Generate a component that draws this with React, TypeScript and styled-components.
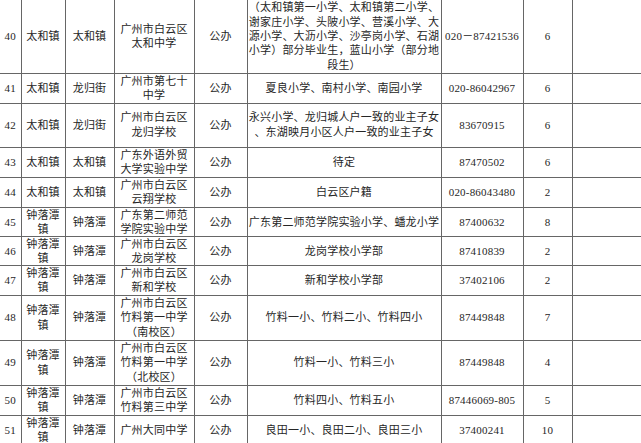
import React from 'react';
import styled, { createGlobalStyle } from 'styled-components';

const GlobalStyle = createGlobalStyle`
  html, body {
    margin: 0;
    padding: 0;
    background: #fff;
  }
`;

const Sheet = styled.div`
  width: 641px;
  height: 443px;
  overflow: hidden;
  background: #fff;
`;

const Table = styled.table`
  width: 641px;
  table-layout: fixed;
  border-collapse: collapse;
  font-family: 'Liberation Serif', 'Noto Sans CJK SC', serif;
  font-size: 11px;
  color: #262626;
`;

const Row = styled.tr<{ $h: number }>`
  height: ${(p) => p.$h}px;
`;

const Cell = styled.td`
  border: 1px solid #666;
  padding: 0;
  text-align: center;
  vertical-align: middle;
  letter-spacing: 0.2px;
  overflow: hidden;

  &:first-child {
    border-left: none;
  }
  &:last-child {
    border-right: none;
  }
  tr:first-child > & {
    border-top: none;
  }
`;

const Line = styled.div<{ $lh: number }>`
  white-space: nowrap;
  height: ${(p) => p.$lh}px;
  line-height: ${(p) => p.$lh}px;
  overflow: visible;
`;

const COLS = [21, 44, 49, 80, 53, 194, 82, 49, 69];

type RowData = {
  no: string;
  town: string[];
  street: string;
  school: string[];
  kind: string;
  area: string[];
  phone: string;
  classes: string;
  h: number;
  lh?: number;
};

const ROWS: RowData[] = [
  {
    no: '40',
    town: ['太和镇'],
    street: '太和镇',
    school: ['广州市白云区', '太和中学'],
    kind: '公办',
    area: [
      '（太和镇第一小学、太和镇第二小学、',
      '谢家庄小学、头陂小学、营溪小学、大',
      '源小学、大沥小学、沙亭岗小学、石湖',
      '小学）部分毕业生，蓝山小学（部分地',
      '段生）',
    ],
    phone: '020－87421536',
    classes: '6',
    h: 73,
    lh: 14.4,
  },
  { no: '41', town: ['太和镇'], street: '龙归街', school: ['广州市第七十', '中学'], kind: '公办', area: ['夏良小学、南村小学、南园小学'], phone: '020-86042967', classes: '6', h: 30 },
  {
    no: '42',
    town: ['太和镇'],
    street: '龙归街',
    school: ['广州市白云区', '龙归学校'],
    kind: '公办',
    area: ['永兴小学、龙归城人户一致的业主子女', '、东湖映月小区人户一致的业主子女'],
    phone: '83670915',
    classes: '6',
    h: 44,
    lh: 15,
  },
  { no: '43', town: ['太和镇'], street: '太和镇', school: ['广东外语外贸', '大学实验中学'], kind: '公办', area: ['待定'], phone: '87470502', classes: '6', h: 30 },
  { no: '44', town: ['太和镇'], street: '太和镇', school: ['广州市白云区', '云翔学校'], kind: '公办', area: ['白云区户籍'], phone: '020-86043480', classes: '2', h: 30 },
  { no: '45', town: ['钟落潭', '镇'], street: '钟落潭', school: ['广东第二师范', '学院实验中学'], kind: '公办', area: ['广东第二师范学院实验小学、蟠龙小学'], phone: '87400632', classes: '8', h: 29 },
  { no: '46', town: ['钟落潭', '镇'], street: '钟落潭', school: ['广州市白云区', '龙岗学校'], kind: '公办', area: ['龙岗学校小学部'], phone: '87410839', classes: '2', h: 29 },
  { no: '47', town: ['钟落潭', '镇'], street: '钟落潭', school: ['广州市白云区', '新和学校'], kind: '公办', area: ['新和学校小学部'], phone: '37402106', classes: '2', h: 30 },
  { no: '48', town: ['钟落潭', '镇'], street: '钟落潭', school: ['广州市白云区', '竹料第一中学', '（南校区）'], kind: '公办', area: ['竹料一小、竹料二小、竹料四小'], phone: '87449848', classes: '7', h: 45, lh: 14.5 },
  { no: '49', town: ['钟落潭', '镇'], street: '钟落潭', school: ['广州市白云区', '竹料第一中学', '（北校区）'], kind: '公办', area: ['竹料一小、竹料三小'], phone: '87449848', classes: '4', h: 45, lh: 14.5 },
  { no: '50', town: ['钟落潭', '镇'], street: '钟落潭', school: ['广州市白云区', '竹料第三中学'], kind: '公办', area: ['竹料四小、竹料五小'], phone: '87446069-805', classes: '5', h: 30 },
  { no: '51', town: ['钟落潭', '镇'], street: '钟落潭', school: ['广州大同中学'], kind: '公办', area: ['良田一小、良田二小、良田三小'], phone: '37400241', classes: '10', h: 29 },
];

const Lines: React.FC<{ lines: string[]; lh: number }> = ({ lines, lh }) => (
  <>
    {lines.map((l, i) => (
      <Line key={i} $lh={lh}>
        {l}
      </Line>
    ))}
  </>
);

export default function App() {
  return (
    <>
      <GlobalStyle />
      <Sheet>
        <Table>
          <colgroup>
            {COLS.map((w, i) => (
              <col key={i} style={{ width: w }} />
            ))}
          </colgroup>
          <tbody>
            {ROWS.map((r) => {
              const lh = r.lh ?? 14;
              return (
                <Row key={r.no} $h={r.h}>
                  <Cell>
                    <Lines lines={[r.no]} lh={lh} />
                  </Cell>
                  <Cell>
                    <Lines lines={r.town} lh={lh} />
                  </Cell>
                  <Cell>
                    <Lines lines={[r.street]} lh={lh} />
                  </Cell>
                  <Cell>
                    <Lines lines={r.school} lh={lh} />
                  </Cell>
                  <Cell>
                    <Lines lines={[r.kind]} lh={lh} />
                  </Cell>
                  <Cell>
                    <Lines lines={r.area} lh={lh} />
                  </Cell>
                  <Cell>
                    <Lines lines={[r.phone]} lh={lh} />
                  </Cell>
                  <Cell>
                    <Lines lines={[r.classes]} lh={lh} />
                  </Cell>
                  <Cell />
                </Row>
              );
            })}
          </tbody>
        </Table>
      </Sheet>
    </>
  );
}
